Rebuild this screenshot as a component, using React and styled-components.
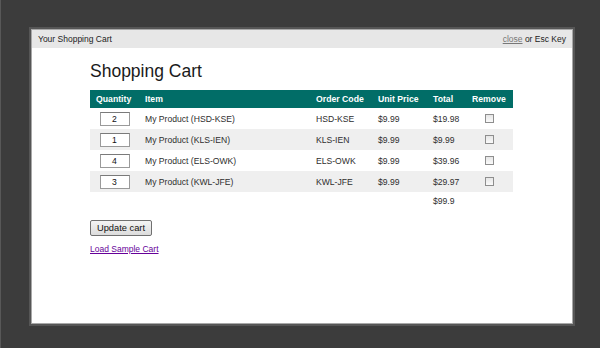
import React from "react";
import styled, { createGlobalStyle } from "styled-components";

const GlobalStyle = createGlobalStyle`
  html, body {
    margin: 0;
    padding: 0;
    background: #3c3c3c;
  }
  body {
    font-family: "Liberation Sans", Arial, sans-serif;
  }
`;

const items = [
  { qty: 2, code: "HSD-KSE", price: "$9.99", total: "$19.98" },
  { qty: 1, code: "KLS-IEN", price: "$9.99", total: "$9.99" },
  { qty: 4, code: "ELS-OWK", price: "$9.99", total: "$39.96" },
  { qty: 3, code: "KWL-JFE", price: "$9.99", total: "$29.97" },
];

function App() {
  return (
    <Page>
      <GlobalStyle />
      <Modal>
        <TitleBar>
          <span>Your Shopping Cart</span>
          <span>
            <CloseLink href="#">close</CloseLink> or Esc Key
          </span>
        </TitleBar>

        <Content>
          <Heading>Shopping Cart</Heading>

          <CartTable>
            <colgroup>
              <col style={{ width: 49 }} />
              <col style={{ width: 171 }} />
              <col style={{ width: 62 }} />
              <col style={{ width: 55 }} />
              <col style={{ width: 39 }} />
              <col style={{ width: 47 }} />
            </colgroup>
            <thead>
              <tr>
                <Th>Quantity</Th>
                <Th>Item</Th>
                <Th>Order Code</Th>
                <Th>Unit Price</Th>
                <Th>Total</Th>
                <Th>Remove</Th>
              </tr>
            </thead>
            <tbody>
              {items.map((item, i) => (
                <Row key={item.code} $shaded={i % 2 === 1}>
                  <Td $center>
                    <QtyInput defaultValue={item.qty} />
                  </Td>
                  <Td>My Product ({item.code})</Td>
                  <Td>{item.code}</Td>
                  <Td>{item.price}</Td>
                  <Td>{item.total}</Td>
                  <Td $center>
                    <Check />
                  </Td>
                </Row>
              ))}
              <TotalRow>
                <Td />
                <Td />
                <Td />
                <Td />
                <Td>$99.9</Td>
                <Td />
              </TotalRow>
            </tbody>
          </CartTable>

          <UpdateButton>Update cart</UpdateButton>
          <SampleLink href="#">Load Sample Cart</SampleLink>
        </Content>
      </Modal>
    </Page>
  );
}

const Page = styled.div`
  height: 348px;
  box-sizing: border-box;
  padding: 27px 0 0 29px;
  border-left: 1px solid #585858;
`;

const Modal = styled.div`
  width: 546px;
  height: 299px;
  box-sizing: border-box;
  margin-left: -1px;
  border: 2px solid #565656;
  padding: 1px;
  background: #a8a8a8;
  display: flex;
  flex-direction: column;
`;

const TitleBar = styled.div`
  height: 18px;
  flex-shrink: 0;
  background: #e7e7e7;
  display: flex;
  align-items: center;
  justify-content: space-between;
  padding: 0 6px;
  font-size: 8.5px;
  color: #222;
`;

const CloseLink = styled.a`
  color: #777;
  text-decoration: underline;
`;

const Content = styled.div`
  flex: 1;
  background: #fff;
  padding: 12px 0 0 58px;
  display: flex;
  flex-direction: column;
  align-items: flex-start;
  box-sizing: border-box;
`;

const Heading = styled.h1`
  margin: 0 0 8px;
  font-size: 17.5px;
  font-weight: normal;
  line-height: 22px;
  color: #1a1a1a;
`;

const CartTable = styled.table`
  width: 423px;
  table-layout: fixed;
  border-collapse: collapse;
  font-size: 8.6px;
  color: #2e2e2e;
`;

const Th = styled.th`
  height: 18px;
  padding: 0 6px;
  background: #016d67;
  color: #fff;
  font-weight: bold;
  text-align: left;
  white-space: nowrap;
  font-size: 8.7px;
`;

const Row = styled.tr`
  height: 21px;
  background: ${({ $shaded }) => ($shaded ? "#efefef" : "#fff")};
`;

const TotalRow = styled.tr`
  height: 18px;
`;

const Td = styled.td`
  padding: 0 6px;
  text-align: ${({ $center }) => ($center ? "center" : "left")};
  vertical-align: middle;
  white-space: nowrap;
`;

const QtyInput = styled.input`
  display: block;
  margin: 0 auto;
  width: 30px;
  height: 14px;
  box-sizing: border-box;
  border: 1px solid #9a9a9a;
  border-top-color: #7a7a7a;
  padding: 0;
  text-align: center;
  font-family: "Liberation Sans", Arial, sans-serif;
  font-size: 8.6px;
  color: #111;
  background: #fff;
`;

const Check = styled.span`
  display: block;
  margin: 0 auto;
  width: 9px;
  height: 9px;
  box-sizing: border-box;
  border: 1px solid #8e8e8e;
  background: linear-gradient(#e6e6e6, #fafafa);
`;

const UpdateButton = styled.button`
  margin-top: 10px;
  width: 62px;
  height: 16px;
  padding: 0;
  box-sizing: border-box;
  border: 1px solid #707070;
  border-radius: 2px;
  background: linear-gradient(#f4f4f4, #dcdcdc);
  font-family: "Liberation Sans", Arial, sans-serif;
  font-size: 9.3px;
  color: #111;
`;

const SampleLink = styled.a`
  margin-top: 8px;
  font-size: 8.5px;
  color: #660099;
  text-decoration: underline;
`;

export default App;
